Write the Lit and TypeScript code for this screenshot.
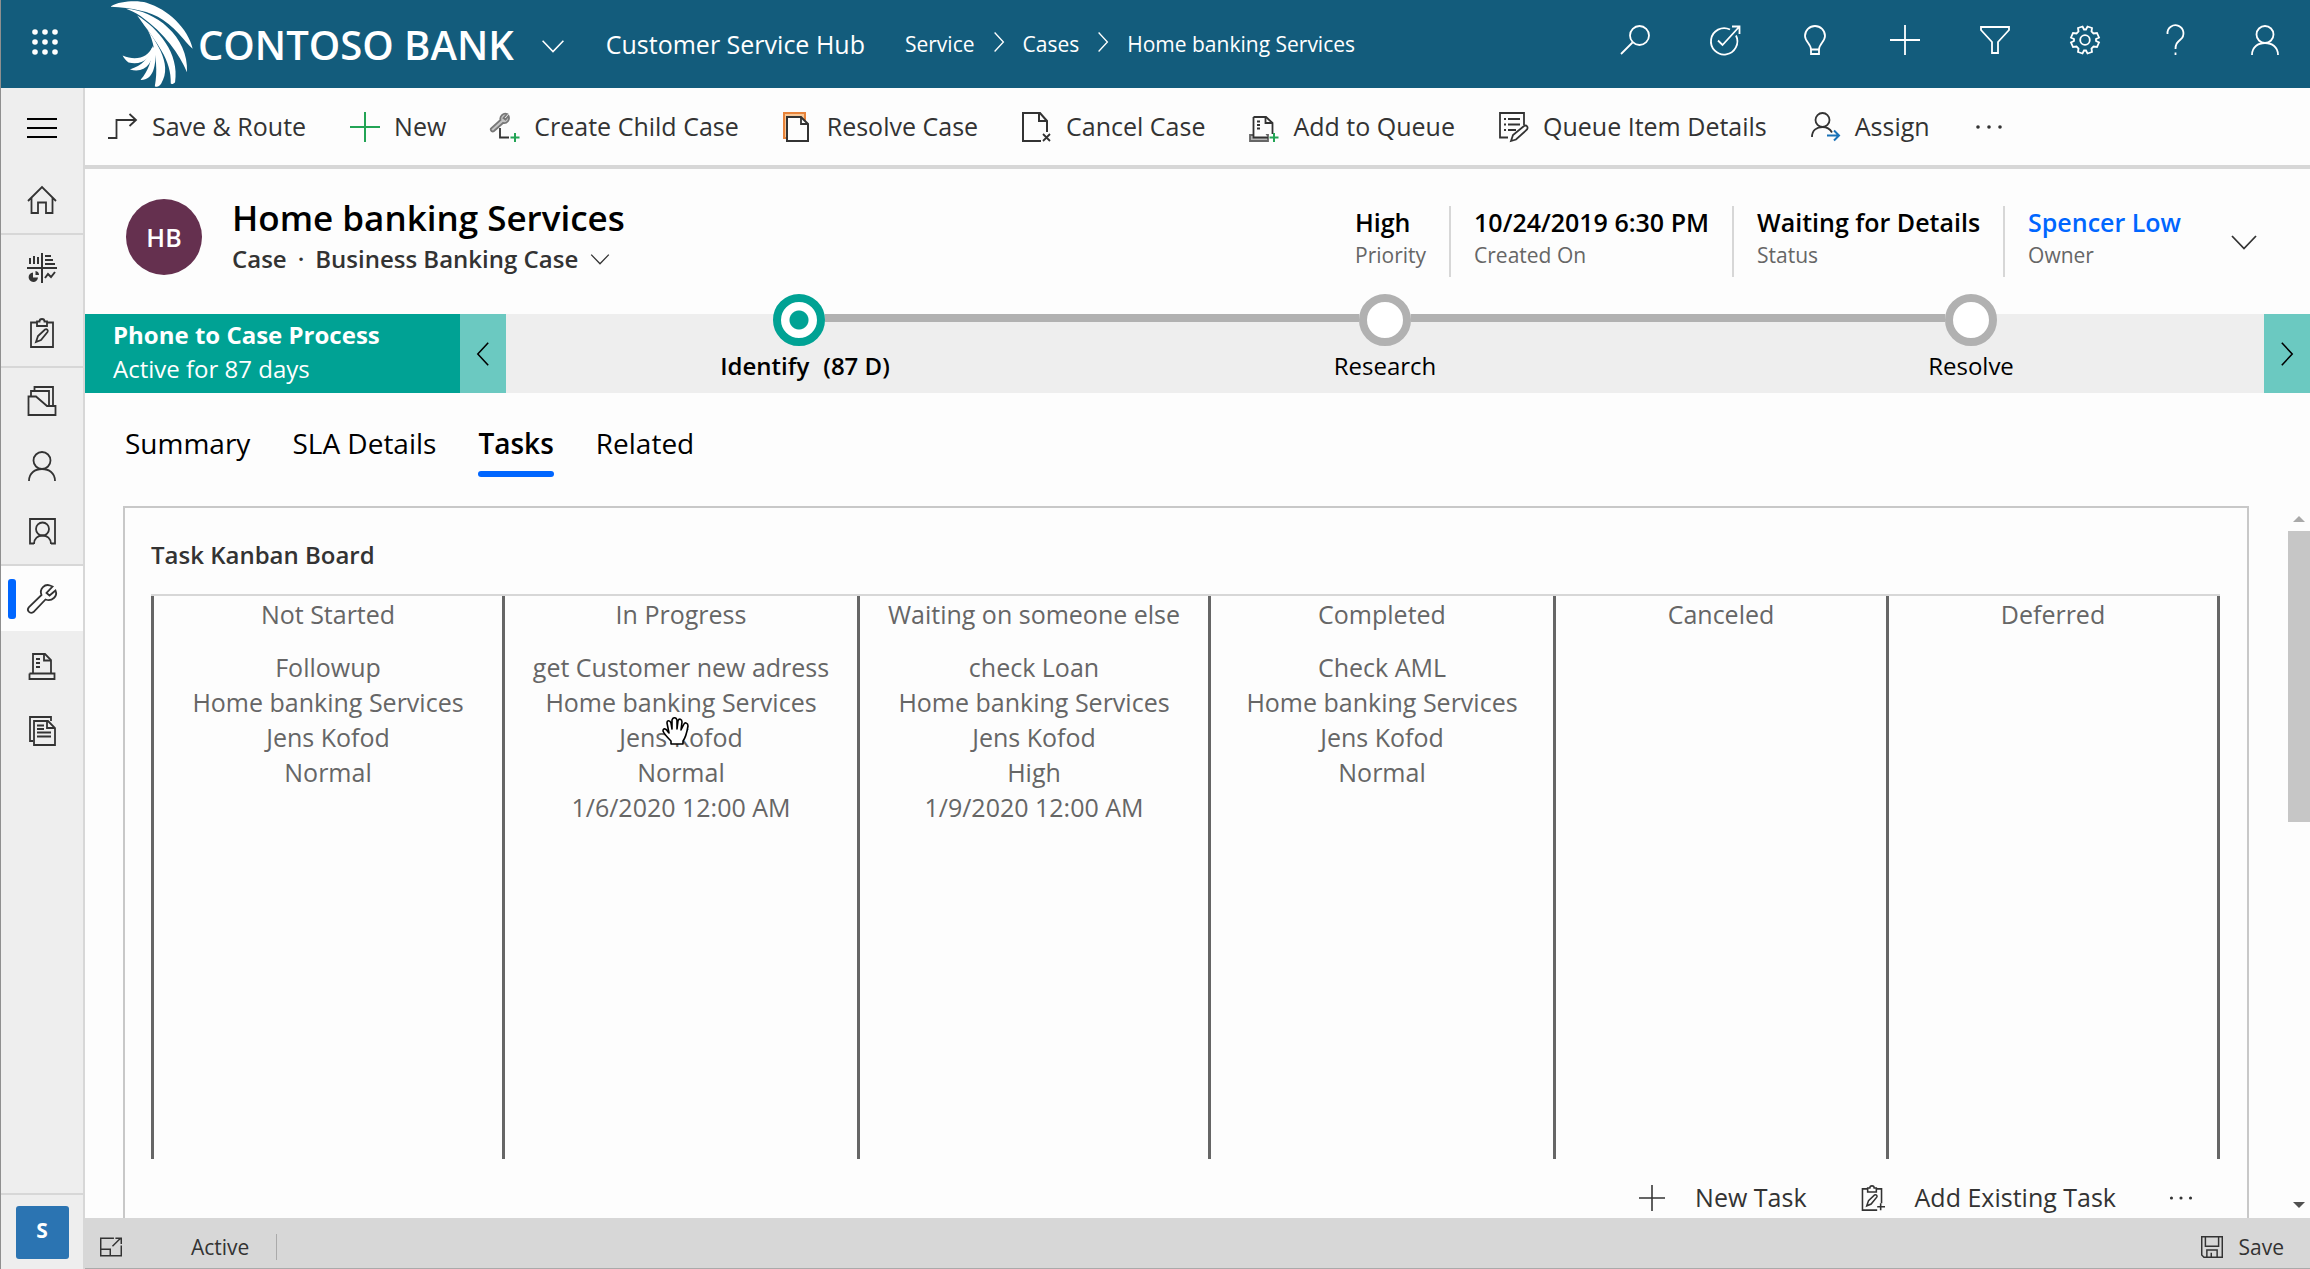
import { LitElement, html, css, svg, TemplateResult } from "lit";
import { customElement, property } from "lit/decorators.js";
import { classMap } from "lit/directives/class-map.js";

/* Line icons on a 30 x 30 grid, drawn in the current text colour. */
const ICONS: Record<string, TemplateResult> = {
  waffle: svg`<g fill="currentColor" stroke="none">${[5, 15, 25].map((y) =>
    [5, 15, 25].map((x) => svg`<circle cx=${x} cy=${y} r="2.8"></circle>`)
  )}</g>`,
  menu: svg`<path stroke-width="2" d="M0 6H30M0 15H30M0 24H30"></path>`,
  search: svg`<circle cx="19.500" cy="10.500" r="9.500"></circle><path d="M12.500 17.500L1 29"></path>`,
  target: svg`<path d="M20 4.500A13.200 13.200 0 1 0 26 10.500"></path><path d="M8 15.500L12.500 20L29 2M22 1.500H29.500V9"></path>`,
  bulb: svg`<path d="M11 24.500C11 19 5 16.500 5 11A10 10 0 0 1 25 11C25 16.500 19 19 19 24.500ZM11 24.500V29H19V24.500"></path>`,
  plus: svg`<path d="M15 0V30M0 15H30"></path>`,
  filter: svg`<path d="M1 2H29V5L18 17V28H12V17L1 5Z"></path>`,
  gear: svg`<circle cx="15" cy="15" r="4.800"></circle><path d="M12.500 1.500L14 4.500H16L17.500 1.500L22 3L21.500 6.500L23.500 8.500L27 8L29 12.500L26 14V16L29 17.500L27 22L23.500 21.500L21.500 23.500L22 27L17.500 28.500L16 25.500H14L12.500 28.500L8 27L8.500 23.500L6.500 21.500L3 22L1 17.500L4 16V14L1 12.500L3 8L6.500 8.500L8.500 6.500L8 3Z"></path>`,
  help: svg`<path d="M7.500 9A8 8 0 1 1 20.500 14.500C17 17.500 15.500 19 15.500 24"></path><path d="M15.500 27.500V30"></path>`,
  person: svg`<circle cx="15" cy="9.500" r="8.500"></circle><path d="M2 30C2 22 8 18 15 18S28 22 28 30"></path>`,
  route: svg`<path d="M0 26H8.500V8H28"></path><path d="M21.500 2L28 8L21.500 14"></path>`,
  newItem: svg`<path stroke="#23a455" stroke-width="2" d="M15 0V30M0 15H30"></path>`,
  childCase: svg`<path fill="#c4c4c4" stroke="#777" d="M17 2A5 5 0 0 0 10.500 8L1 16.500A2 2 0 0 0 4 19L13 11A5 5 0 0 0 18.500 4L15.500 7.500L13.500 6Z"></path><path d="M10 16V25.500H19"></path><path stroke="#23a455" stroke-width="2" d="M25 21V30M20.500 25.500H29.500"></path>`,
  resolve: svg`<path fill="#f9c795" stroke="#e8833a" stroke-width="2" d="M1 1H22V26H1Z"></path><path fill="#fdfdfd" stroke-width="2" d="M4 5H18L25 12V29H4Z"></path><path d="M18 5V12H25"></path>`,
  cancel: svg`<path stroke-width="2" d="M19 29H1V1H18L25 9V20"></path><path stroke-width="2" d="M17 1V9H25"></path><path d="M21 22L28 29M28 22L21 29"></path>`,
  addQueue: svg`<path fill="#b5b5b5" stroke="#666" d="M1 23H19V29H1Z"></path><path fill="#fdfdfd" d="M4.500 5H17L23.500 11V22M4.500 5V25.500H19"></path><path d="M16.500 5V11H23.500M8 9.500H11M8 13H11M8 16.500H11"></path><path stroke="#23a455" stroke-width="2" d="M25 21V30M20.500 25.500H29.500"></path>`,
  queueDetails: svg`<path d="M9 25.500H1V1H25V13"></path><path d="M5 7H7M9 7H21M5 12.500H7M9 12.500H21M5 18H7M9 18H17"></path><path d="M12 29L14 23L25 14C27.500 12.500 29.500 15 28 17.500L17 27.500Z"></path>`,
  assign: svg`<circle cx="11.500" cy="8" r="7"></circle><path d="M1 25C1 18 6 15 11.500 15C16 15 19 17 21 20.500"></path><path stroke="#1a73b8" stroke-width="2" d="M16 23.500H28M23 18.500L28 23.500L23 28.500"></path>`,
  more: svg`<g fill="currentColor" stroke="none"><circle cx="4" cy="15" r="1.800"></circle><circle cx="15" cy="15" r="1.800"></circle><circle cx="26" cy="15" r="1.800"></circle></g>`,
  down: svg`<path d="M3 9L15 21.500L27 9"></path>`,
  left: svg`<path d="M21 2L9 15L21 28"></path>`,
  right: svg`<path d="M9 2L21 15L9 28"></path>`,
  home: svg`<path d="M1 16L15 2L29 16M4.500 13V28H11V17.500H19V28H25.500V13"></path>`,
  dashboard: svg`<path stroke-width="2" d="M0 15H30M15 0V30M3 11V5M7 11V3M11 11V4M18 3H24M18 7H26M18 11H28"></path><path stroke-width="2" d="M18 25L21 21L24 24L28 19"></path><path fill="currentColor" stroke="none" d="M6 19.500V24.500H11A4.700 4.700 0 1 1 6 19.500ZM8.500 18A4 4 0 0 1 12 22H8.500Z"></path>`,
  clipboard: svg`<path d="M10 4.500H4V29H26V4.500H20M10 3.500V8H20V3.500H17.500A2.500 2.500 0 0 0 12.500 3.500Z"></path><path d="M9 24L11 18L18 11.500C20 10.500 21.500 12.500 20.500 14L14 22Z"></path>`,
  clipboardAdd: svg`<path d="M10 4.500H4V29H21M26 21V4.500H20M10 3.500V8H20V3.500H17.500A2.500 2.500 0 0 0 12.500 3.500Z"></path><path d="M9 24L11 18L18 11.500C20 10.500 21.500 12.500 20.500 14L14 22ZM25 21V29M21 25H30"></path>`,
  folder: svg`<path d="M1.500 29V10.500H9L20 20H28.500V29ZM4 10.500V5H22V20M7.500 5V1H26V20"></path>`,
  contact: svg`<path d="M7 27.500H3V3H28V27.500H24"></path><circle cx="15.500" cy="13" r="6.500"></circle><path d="M7 28C7 22.500 11 19.500 15.500 19.500S24 22.500 24 28"></path>`,
  wrench: svg`<path d="M23 1.500C18 -.500 12 4.500 14.500 11L2 23C-1 26.500 3 30.500 6.500 28L18.500 15.500C25 18 31 12 28.500 6.500L22.500 11.500L19.500 9L25.500 2.500Z"></path>`,
  queue: svg`<path d="M6 22.500V3H18L24 9V22.500M2.500 22.500V28H27.500V22.500H2.500"></path><path d="M17 3V9.500H24M9 8H13M9 12H13M9 16H13"></path>`,
  docs: svg`<path d="M6 25H3V1H24V5M7 5H21L28 12V29H7Z"></path><path d="M20 5V12H28M10 9.500H17M10 13H17M10 16.500H24M10 20.500H24"></path>`,
  expand: svg`<path stroke-width="2" d="M19 3H1V27H29V13M1 18H14V27M17 14L28 3M21 3H29V11"></path>`,
  save: svg`<path stroke-width="2" d="M1 1H29V29H4L1 26ZM6 1V14H24V1M8 29V19H22V29M14 23V29"></path>`,
};

@customElement("hub-icon")
export class HubIcon extends LitElement {
  @property() name = "";

  static styles = css`
    :host {
      display: inline-flex;
      flex: none;
      width: 30px;
      height: 30px;
    }
    .glyph {
      width: 100%;
      height: 100%;
      overflow: visible;
      fill: none;
      stroke: currentColor;
      stroke-width: 1.8;
    }
  `;

  render() {
    return html`<svg class="glyph" viewBox="0 0 30 30" aria-hidden="true">${ICONS[this.name]}</svg>`;
  }
}

interface Task {
  subject: string;
  regarding: string;
  owner: string;
  priority: string;
  due?: string;
  held?: boolean;
}

const regarding = "Home banking Services";
const owner = "Jens Kofod";

const COLUMNS: { title: string; tasks: Task[] }[] = [
  { title: "Not Started", tasks: [{ subject: "Followup", regarding, owner, priority: "Normal" }] },
  {
    title: "In Progress",
    tasks: [{ subject: "get Customer new adress", regarding, owner, priority: "Normal", due: "1/6/2020 12:00 AM", held: true }],
  },
  {
    title: "Waiting on someone else",
    tasks: [{ subject: "check Loan", regarding, owner, priority: "High", due: "1/9/2020 12:00 AM" }],
  },
  { title: "Completed", tasks: [{ subject: "Check AML", regarding, owner, priority: "Normal" }] },
  { title: "Canceled", tasks: [] },
  { title: "Deferred", tasks: [] },
];

@customElement("task-board")
export class TaskBoard extends LitElement {
  static styles = css`
    :host {
      display: flex;
      flex-direction: column;
      color: #666;
    }
    .board {
      flex: 1;
      display: grid;
      grid-template-columns: 351fr 355fr 351fr 345fr 333fr 334fr;
      border-top: 2px solid #d7d7d7;
    }
    .column {
      border-left: 3px solid #666;
      text-align: center;
      padding-top: 1px;
    }
    .column:last-child {
      border-right: 3px solid #666;
    }
    .title {
      margin: 0 0 18px;
      font-size: 25px;
      line-height: 35px;
      font-weight: 400;
    }
    .task {
      position: relative;
      line-height: 35px;
    }
    .line {
      margin: 0;
    }
    .hand {
      position: absolute;
      left: calc(50% - 19px);
      top: 67px;
      width: 27px;
      height: 28px;
    }
  `;

  private task(t: Task) {
    return html`<article class="task">
      <p class="line">${t.subject}</p>
      <p class="line">${t.regarding}</p>
      <p class="line">${t.owner}</p>
      <p class="line">${t.priority}</p>
      ${t.due ? html`<p class="line">${t.due}</p>` : ""}
      ${t.held
        ? html`<svg class="hand" viewBox="0 0 27 28" aria-hidden="true">
            <path
              fill="#fff"
              stroke="#000"
              stroke-width="1.600"
              stroke-linejoin="round"
              d="M9 27V24C6 21 2 17 1 14C1 11 4 11 6 15L7 16L5 6C5 3 8 3 9 6L10 12V3C11 0 14 0 15 3V12L16 4C17 1 20 2 20 5L19 13L22 7C23 5 26 6 26 9C25 15 24 20 21 24V27Z"
            ></path>
          </svg>`
        : ""}
    </article>`;
  }

  render() {
    return html`<div class="board">
      ${COLUMNS.map(
        (c) => html`<section class="column">
          <h3 class="title">${c.title}</h3>
          ${c.tasks.map((t) => this.task(t))}
        </section>`
      )}
    </div>`;
  }
}

const COMMANDS = [
  ["route", "Save & Route"],
  ["newItem", "New"],
  ["childCase", "Create Child Case"],
  ["resolve", "Resolve Case"],
  ["cancel", "Cancel Case"],
  ["addQueue", "Add to Queue"],
  ["queueDetails", "Queue Item Details"],
  ["assign", "Assign"],
];

const TOOLS = [
  ["search", "Search"],
  ["target", "Assistant"],
  ["bulb", "Insights"],
  ["plus", "Quick create"],
  ["filter", "Advanced find"],
  ["gear", "Settings"],
  ["help", "Help"],
  ["person", "Account"],
];

const NAV: [string, string][][] = [
  [["home", "Home"]],
  [["dashboard", "Dashboards"], ["clipboard", "Activities"]],
  [["folder", "Accounts"], ["person", "Contacts"], ["contact", "Social Profiles"]],
  [["wrench", "Cases"], ["queue", "Queues"], ["docs", "Knowledge Articles"]],
];

const FIELDS = [
  ["High", "Priority"],
  ["10/24/2019 6:30 PM", "Created On"],
  ["Waiting for Details", "Status"],
];

const STAGES = ["Identify", "Research", "Resolve"];

@customElement("app-root")
export class AppRoot extends LitElement {
  static styles = css`
    :host {
      display: grid;
      grid-template-columns: auto minmax(0, 1fr);
      grid-template-rows: auto minmax(0, 1fr);
      height: 100vh;
      box-sizing: border-box;
      overflow: hidden;
      border-left: 1px solid #8f8f8f;
      background: #fdfdfd;
      color: #333;
      font: 25px/35px "Open Sans", "Noto Sans", sans-serif;
    }
    button {
      font: inherit;
      color: inherit;
      background: none;
      border: 0;
      padding: 0;
      margin: 0;
      display: flex;
      align-items: center;
      justify-content: center;
      cursor: pointer;
    }
    a {
      color: inherit;
      text-decoration: none;
    }
    .small {
      width: 22px;
      height: 22px;
    }
    .mid {
      width: 26px;
      height: 26px;
    }

    .top {
      grid-column: 1 / -1;
      display: flex;
      align-items: center;
      height: 88px;
      background: #135c7c;
      color: #fff;
    }
    .waffle {
      width: 87px;
      height: 88px;
      padding-bottom: 4px;
    }
    .brand {
      display: flex;
      align-items: center;
      margin-left: 22px;
      font-size: 40px;
      font-weight: 600;
    }
    .wing {
      width: 83px;
      height: 88px;
      margin-right: 5px;
      fill: #fff;
    }
    .pick {
      margin: 4px 40px 0 26px;
    }
    .hub {
      margin-right: 40px;
    }
    .crumbs {
      display: flex;
      align-items: center;
      gap: 13px;
      font-size: 21px;
    }
    .crumbs hub-icon {
      width: 22px;
      height: 22px;
      padding-bottom: 4px;
    }
    .tools {
      display: flex;
      align-self: flex-start;
      margin-left: auto;
    }
    .tool {
      width: 90px;
      height: 80px;
    }

    .rail {
      width: 82px;
      display: flex;
      flex-direction: column;
      background: #eee;
      border-right: 2px solid #d7d7d7;
      grid-row: 2;
    }
    .burger {
      height: 79px;
      color: #000;
    }
    .group {
      padding-bottom: 1px;
      border-bottom: 2px solid #d7d7d7;
    }
    .group:last-of-type {
      border: 0;
      padding: 0;
    }
    .nav {
      display: flex;
      align-items: center;
      justify-content: center;
      height: 65px;
    }
    .nav.current {
      position: relative;
      background: #fdfdfd;
      margin-bottom: 2px;
    }
    .nav.current::before {
      content: "";
      position: absolute;
      left: 7px;
      top: 13px;
      width: 8px;
      height: 40px;
      border-radius: 3px;
      background: #06f;
    }
    .area {
      margin-top: auto;
      height: 76px;
      border-top: 2px solid #d7d7d7;
    }
    .tile {
      width: 53px;
      height: 53px;
      border-radius: 3px;
      background: #2b74b2;
      color: #fff;
      font-size: 21px;
      font-weight: 700;
      line-height: 48px;
    }

    .main {
      display: flex;
      flex-direction: column;
      min-height: 0;
    }
    .commands {
      display: flex;
      align-items: center;
      gap: 44px;
      height: 77px;
      padding-left: 23px;
      border-bottom: 4px solid #d7d7d7;
    }
    .command {
      gap: 14px;
      white-space: nowrap;
    }

    .record {
      display: flex;
      align-items: center;
      height: 145px;
      box-sizing: border-box;
      padding: 0 51px 0 41px;
    }
    .identity {
      display: flex;
      align-items: center;
      padding-bottom: 9px;
    }
    .avatar {
      width: 76px;
      height: 76px;
      border-radius: 50%;
      background: #65304f;
      color: #fff;
      display: flex;
      align-items: center;
      justify-content: center;
      font-weight: 600;
    }
    .heading {
      margin-left: 30px;
    }
    .name {
      margin: 0;
      font-size: 35px;
      line-height: 44px;
      font-weight: 600;
      color: #000;
    }
    .form {
      font-size: 24px;
      font-weight: 600;
      line-height: 38px;
      gap: 11px;
    }
    .fields {
      display: flex;
      margin: 0 0 0 auto;
    }
    .field {
      display: flex;
      flex-direction: column;
      padding: 0 23px;
      height: 71px;
      border-left: 2px solid #d7d7d7;
    }
    .field:first-child {
      border: 0;
    }
    .value {
      order: -1;
      margin: 0;
      line-height: 33px;
      color: #000;
      font-weight: 600;
    }
    .label {
      font-size: 21px;
      line-height: 32px;
      color: #666;
    }
    .owner {
      color: #06f;
    }
    .expand {
      margin-left: 25px;
    }

    .process {
      display: flex;
      height: 79px;
      background: #eee;
      color: #000;
    }
    .flow {
      width: 375px;
      box-sizing: border-box;
      padding: 4px 28px;
      background: #00a294;
      color: #fff;
      font-size: 24px;
      line-height: 34px;
    }
    .flow-name {
      display: block;
      font-weight: 700;
    }
    .step {
      width: 46px;
      background: #6bc9c1;
      color: #000;
    }
    .stages {
      flex: 1;
      display: flex;
      margin: -20px 0 0;
      padding: 0;
      list-style: none;
      font-size: 24px;
    }
    .stage {
      flex: 1;
      display: grid;
      grid-template-columns: 1fr 52px 1fr;
      grid-template-rows: 52px auto;
      row-gap: 2px;
    }
    .bar {
      height: 8px;
      margin-top: 20px;
      background: #b1b1b1;
    }
    .bar.none {
      background: none;
    }
    .dot {
      box-sizing: border-box;
      width: 52px;
      height: 52px;
      border: 8px solid #b1b1b1;
      border-radius: 50%;
      background: #fff;
    }
    .dot.active {
      border-color: #00a294;
      background: radial-gradient(circle, #00a294 9px, #fff 10px);
    }
    .stage-name {
      grid-column: 1 / -1;
      display: flex;
      gap: 14px;
      justify-content: center;
    }
    .stage-name.active {
      font-weight: 600;
      padding-left: 12px;
    }

    .tabs {
      display: flex;
      gap: 42px;
      padding: 29px 0 29px 40px;
      font-size: 28px;
      line-height: 42px;
      color: #000;
    }
    .tab::after {
      content: "";
      display: block;
      height: 6px;
      margin-top: 7px;
      border-radius: 3px;
    }
    .tab.current {
      font-weight: 600;
    }
    .tab.current::after {
      background: #06f;
    }
    .content {
      flex: 1;
      display: flex;
      min-height: 0;
      padding-left: 38px;
    }
    .card {
      flex: 1;
      display: flex;
      flex-direction: column;
      border: 2px solid #c8c8c8;
      border-bottom: 0;
      padding: 29px 27px 0 26px;
    }
    .card-title {
      margin: 0 0 22px;
      font-size: 24px;
      font-weight: 600;
    }
    task-board {
      flex: 1;
    }
    .card-actions {
      display: flex;
      justify-content: flex-end;
      align-items: center;
      gap: 52px;
      height: 41px;
      padding: 18px 26px 0 0;
    }
    .card-action {
      gap: 30px;
    }
    .scroll {
      width: 22px;
      margin-left: 39px;
      display: flex;
      flex-direction: column;
      align-items: center;
      padding: 10px 0;
      box-sizing: border-box;
    }
    .arrow {
      width: 12px;
      height: 6px;
      background: #505050;
      clip-path: polygon(0 0, 100% 0, 50% 100%);
    }
    .arrow.up {
      background: #a9a9a9;
      clip-path: polygon(50% 0, 100% 100%, 0 100%);
    }
    .thumb {
      width: 100%;
      height: 42%;
      margin: 9px 0 auto;
      background: #c6c6c6;
    }

    .status {
      display: flex;
      align-items: center;
      height: 51px;
      padding: 8px 26px 0 15px;
      box-sizing: border-box;
      border-bottom: 1px solid #aaa;
      background: #d7d7d7;
      font-size: 21px;
      line-height: 26px;
    }
    .state {
      margin-left: 69px;
      padding-right: 27px;
      border-right: 1px solid #aaa;
    }
    .save {
      margin-left: auto;
      gap: 16px;
    }
  `;

  private top() {
    return html`<header class="top">
      <button class="waffle" aria-label="Apps"><hub-icon name="waffle"></hub-icon></button>
      <div class="brand">
        <svg class="wing" viewBox="30 0 250 264" aria-hidden="true">
          <path d="M33 18C60 2 115 0 140 8C205 28 265 85 279 146C258 130 240 95 190 60C150 32 95 24 33 20Z"></path>
          <path d="M78 26C165 30 268 110 262 217C240 165 195 100 122 48C105 36 90 30 78 26Z"></path>
          <path d="M112 46C175 85 240 160 226 247C222 253 214 253 213 251C216 180 172 130 112 46Z"></path>
          <path d="M118 54C165 120 222 190 184 252C178 261 170 262 165 259C174 215 168 170 159 130C150 95 135 75 118 54Z"></path>
          <path d="M165 140C172 200 158 242 122 240C146 214 156 180 158 145Z"></path>
          <path d="M163 142C160 190 135 222 90 209C126 197 148 175 156 145Z"></path>
          <path d="M160 138C156 175 125 198 86 188C78 182 72 175 68 167C112 185 145 170 158 140Z"></path>
        </svg>
        CONTOSO BANK
      </div>
      <button class="pick" aria-label="Switch app"><hub-icon class="mid" name="down"></hub-icon></button>
      <a class="hub" href="#hub">Customer Service Hub</a>
      <nav class="crumbs" aria-label="Breadcrumb">
        <a href="#service">Service</a><hub-icon name="right"></hub-icon>
        <a href="#cases">Cases</a><hub-icon name="right"></hub-icon>
        <a href="#record">Home banking Services</a>
      </nav>
      <div class="tools">
        ${TOOLS.map(([icon, label]) => html`<button class="tool" aria-label=${label}><hub-icon name=${icon}></hub-icon></button>`)}
      </div>
    </header>`;
  }

  private rail() {
    return html`<nav class="rail" aria-label="Site map">
      <button class="burger" aria-label="Menu"><hub-icon name="menu"></hub-icon></button>
      ${NAV.map(
        (group) => html`<div class="group">
          ${group.map(
            ([icon, label]) => html`<a
              class=${classMap({ nav: true, current: icon === "wrench" })}
              href="#${icon}"
              aria-label=${label}
              ><hub-icon name=${icon}></hub-icon
            ></a>`
          )}
        </div>`
      )}
      <button class="area" aria-label="Service area"><span class="tile">S</span></button>
    </nav>`;
  }

  private stage(name: string, i: number) {
    const active = i === 0;
    return html`<li class="stage">
      <span class=${classMap({ bar: true, none: i === 0 })}></span>
      <span class=${classMap({ dot: true, active })}></span>
      <span class=${classMap({ bar: true, none: i === STAGES.length - 1 })}></span>
      <span class=${classMap({ "stage-name": true, active })}>
        <span>${name}</span>${active ? html`<span>(87 D)</span>` : ""}
      </span>
    </li>`;
  }

  render() {
    return html`${this.top()}${this.rail()}
      <main class="main">
        <div class="commands" role="toolbar" aria-label="Commands">
          ${COMMANDS.map(
            ([icon, label]) => html`<button class="command"><hub-icon name=${icon}></hub-icon>${label}</button>`
          )}
          <button aria-label="More commands"><hub-icon name="more"></hub-icon></button>
        </div>

        <section class="record">
          <div class="identity">
            <span class="avatar">HB</span>
            <div class="heading">
              <h1 class="name">Home banking Services</h1>
              <button class="form">
                <span>Case</span><span>·</span><span>Business Banking Case</span>
                <hub-icon class="small" name="down"></hub-icon>
              </button>
            </div>
          </div>
          <dl class="fields">
            ${FIELDS.map(([value, label]) => html`<div class="field"><dt class="label">${label}</dt><dd class="value">${value}</dd></div>`)}
            <div class="field">
              <dt class="label">Owner</dt>
              <dd class="value"><a class="owner" href="#owner">Spencer Low</a></dd>
            </div>
          </dl>
          <button class="expand" aria-label="More fields"><hub-icon name="down"></hub-icon></button>
        </section>

        <section class="process" aria-label="Business process">
          <div class="flow"><strong class="flow-name">Phone to Case Process</strong>Active for 87 days</div>
          <button class="step" aria-label="Previous stage"><hub-icon class="mid" name="left"></hub-icon></button>
          <ol class="stages">${STAGES.map((s, i) => this.stage(s, i))}</ol>
          <button class="step" aria-label="Next stage"><hub-icon class="mid" name="right"></hub-icon></button>
        </section>

        <nav class="tabs" aria-label="Form tabs">
          ${["Summary", "SLA Details", "Tasks", "Related"].map(
            (t) => html`<a class=${classMap({ tab: true, current: t === "Tasks" })} href="#${t}">${t}</a>`
          )}
        </nav>

        <div class="content">
          <section class="card">
            <h2 class="card-title">Task Kanban Board</h2>
            <task-board></task-board>
            <div class="card-actions">
              <button class="card-action"><hub-icon class="mid" name="plus"></hub-icon>New Task</button>
              <button class="card-action"><hub-icon class="mid" name="clipboardAdd"></hub-icon>Add Existing Task</button>
              <button aria-label="More actions"><hub-icon class="mid" name="more"></hub-icon></button>
            </div>
          </section>
          <div class="scroll" aria-hidden="true">
            <span class="arrow up"></span><span class="thumb"></span><span class="arrow"></span>
          </div>
        </div>

        <footer class="status">
          <button aria-label="Open in new window"><hub-icon class="small" name="expand"></hub-icon></button>
          <span class="state">Active</span>
          <button class="save"><hub-icon class="small" name="save"></hub-icon>Save</button>
        </footer>
      </main>`;
  }
}
